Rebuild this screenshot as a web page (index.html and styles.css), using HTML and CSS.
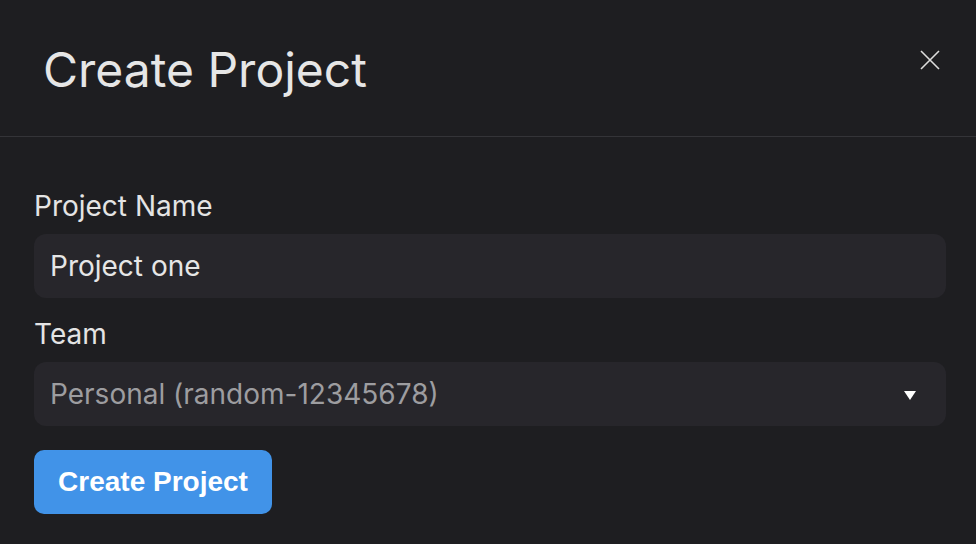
FILE: index.html
```html
<!DOCTYPE html>
<html lang="en">
<head>
<meta charset="utf-8">
<title>Create Project</title>
<link rel="stylesheet" href="styles.css">
</head>
<body>
<div class="modal">
  <header class="modal-header">
    <h1 class="modal-title">Create Project</h1>
    <button class="close-btn" aria-label="Close">
      <svg width="20" height="20" viewBox="0 0 20 20"><path d="M1 1L19 19M19 1L1 19" stroke="#dcdcdc" stroke-width="1.6" fill="none"/></svg>
    </button>
  </header>
  <form class="modal-body">
    <label class="field-label">Project Name</label>
    <div class="input">Project one</div>
    <label class="field-label team">Team</label>
    <div class="input select">
      <span class="placeholder">Personal (random-12345678)</span>
      <svg class="caret" width="12" height="9" viewBox="0 0 12 9"><path d="M0 0H12L6 9Z" fill="#ffffff"/></svg>
    </div>
    <div class="actions">
      <button type="button" class="primary-btn">Create Project</button>
    </div>
  </form>
</div>
</body>
</html>
```
FILE: styles.css
```css
* { box-sizing: border-box; }
html, body {
  margin: 0;
  padding: 0;
  background: #1e1e21;
  width: 976px;
  height: 544px;
  overflow: hidden;
  font-family: Inter, "Noto Sans", sans-serif;
}
.modal {
  display: flex;
  flex-direction: column;
}
.modal-header {
  height: 137px;
  border-bottom: 1px solid #343438;
  display: flex;
  align-items: flex-start;
  justify-content: space-between;
  padding: 0 36px 0 43px;
}
.modal-title {
  margin: 0;
  margin-top: 42px;
  font-size: 48px;
  font-weight: 400;
  color: #e6e6e6;
  line-height: 56px;
}
.close-btn {
  margin-top: 50px;
  background: none;
  border: 0;
  padding: 0;
  width: 20px;
  height: 20px;
  display: flex;
}
.modal-body {
  display: flex;
  flex-direction: column;
  padding: 52px 30px 0 34px;
  margin: 0;
}
.field-label {
  font-size: 28px;
  color: #e4e4e4;
  line-height: 34px;
  margin-bottom: 11px;
}
.field-label.team {
  margin-top: 19px;
}
.input {
  height: 64px;
  background: #27262b;
  border-radius: 12px;
  display: flex;
  align-items: center;
  padding: 0 16px;
  font-size: 28px;
  color: #e6e6e6;
}
.select {
  justify-content: space-between;
  padding-right: 30px;
}
.placeholder {
  color: #9d9da0;
}
.caret {
  margin-top: 2px;
}
.actions {
  margin-top: 24px;
  display: flex;
}
.primary-btn {
  height: 64px;
  width: 238px;
  border: 0;
  border-radius: 10px;
  background: #4193e8;
  color: #ffffff;
  font-family: "Liberation Sans", Arial, sans-serif;
  font-weight: 700;
  font-size: 28px;
  padding: 0;
}
```
